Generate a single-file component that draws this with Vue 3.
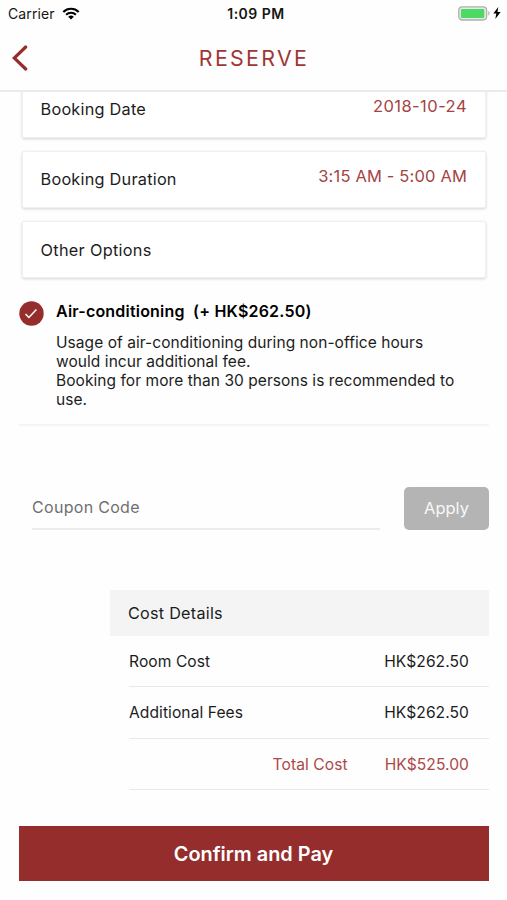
<script setup>
const bookingRows = [
  { id: 'date', label: 'Booking Date', value: '2018-10-24' },
  { id: 'duration', label: 'Booking Duration', value: '3:15 AM - 5:00 AM' },
  { id: 'options', label: 'Other Options', value: '' },
]

const costRows = [
  { id: 'room', label: 'Room Cost', amount: 'HK$262.50' },
  { id: 'fees', label: 'Additional Fees', amount: 'HK$262.50' },
]
</script>

<template>
  <div class="screen">
    <div class="status-bar">
      <div class="carrier">
        <span class="carrier-name">Carrier</span>
        <svg class="wifi" width="18" height="13" viewBox="0 0 18 13" fill="none" stroke="#000" stroke-width="2.1">
          <path d="M1.3 4.9a11 11 0 0 1 15.4 0" />
          <path d="M4.1 7.8a7 7 0 0 1 9.8 0" />
          <path d="M9 12.5 6.2 9.8a4 4 0 0 1 5.6 0Z" fill="#000" stroke="none" />
        </svg>
      </div>
      <span class="clock">1:09 PM</span>
      <div class="power">
        <svg width="34" height="15" viewBox="0 0 34 15">
          <rect x="0.8" y="0.8" width="27.8" height="13.2" rx="3.4" fill="#e4ece4" stroke="#adb0ad" stroke-width="1.3" />
          <rect x="2.9" y="2.9" width="23.4" height="9" rx="1.2" fill="#4cd964" />
          <path d="M30.3 5.1c1.7.5 1.7 4.1 0 4.6Z" fill="#adb0ad" />
        </svg>
        <svg class="bolt" width="8" height="12" viewBox="0 0 8 12">
          <path d="M5.3 0 .3 6.6h3L2.3 12l5.4-7H4.5Z" fill="#000" />
        </svg>
      </div>
    </div>

    <header class="nav-bar">
      <svg class="back" width="16" height="26" viewBox="0 0 16 26" fill="none" stroke="#962d2d" stroke-width="3.2" stroke-linecap="round">
        <path d="M13.7 2 2.2 13l11.5 11" stroke-linejoin="miter" />
      </svg>
      <h1 class="title">RESERVE</h1>
    </header>

    <main class="content">
      <section class="cards">
        <div v-for="row in bookingRows" :key="row.id" class="card">
          <span class="card-label" :class="'label-' + row.id">{{ row.label }}</span>
          <span class="card-value" :class="'value-' + row.id">{{ row.value }}</span>
        </div>
      </section>

      <section class="option">
        <svg class="check" width="25" height="25" viewBox="0 0 25 25" fill="none">
          <circle cx="12.5" cy="12.5" r="12.2" fill="#962d2d" />
          <path d="m6.5 13 3.4 3.5 7.5-8" stroke="#fff" stroke-width="1.5" />
        </svg>
        <div class="option-text">
          <h2 class="option-title">Air-conditioning&nbsp; (+ HK$262.50)</h2>
          <p class="option-note">
            Usage of air-conditioning during non-office hours<br />
            would incur additional fee.<br />
            Booking for more than 30 persons is recommended to<br />
            use.
          </p>
        </div>
      </section>

      <section class="coupon">
        <div class="coupon-field">Coupon Code</div>
        <button class="apply" type="button">Apply</button>
      </section>

      <section class="costs">
        <h2 class="costs-title">Cost Details</h2>
        <div class="cost-rows">
          <div v-for="row in costRows" :key="row.id" class="cost-row">
            <span class="cost-label">{{ row.label }}</span>
            <span>{{ row.amount }}</span>
          </div>
          <div class="cost-row total">
            <span class="total-label">Total Cost</span>
            <span>HK$525.00</span>
          </div>
        </div>
      </section>

      <button class="confirm" type="button">Confirm and Pay</button>
    </main>
  </div>
</template>

<style>
body {
  background: #fefefe;
}
</style>

<style scoped>
.screen {
  display: flex;
  flex-direction: column;
  width: 507px;
  height: 900px;
  overflow: hidden;
  background: #fefefe;
  color: #1c1c1c;
  font-family: Inter, "Liberation Sans", sans-serif;
  font-size: 16px;
}

h1,
h2,
p {
  margin: 0;
  font-weight: 400;
}

button {
  border: 0;
  padding: 0;
  font-family: inherit;
}

.status-bar {
  display: grid;
  grid-template-columns: 1fr auto 1fr;
  align-items: center;
  height: 28px;
  padding: 0 6px 0 8px;
  color: #151515;
}

.carrier {
  display: flex;
  align-items: center;
  gap: 7px;
}

.carrier-name {
  margin-top: -2px;
  font-size: 14px;
  letter-spacing: 0.1px;
}

.wifi {
  margin-top: -2px;
}

.clock {
  padding-left: 3px;
  margin-top: -1px;
  font-size: 14px;
  font-weight: 600;
  letter-spacing: 0.5px;
}

.power {
  display: flex;
  justify-content: flex-end;
  align-items: center;
  gap: 1px;
  margin-top: -2px;
}

.nav-bar {
  display: flex;
  align-items: center;
  flex: none;
  height: 64px;
  box-sizing: border-box;
  padding: 0 12px 2px;
  border-bottom: 2px solid #ebebeb;
}

.title {
  flex: 1;
  padding-right: 15px;
  color: #a13636;
  font-size: 21.4px;
  letter-spacing: 2.3px;
  line-height: 28px;
  text-align: center;
}

.content {
  display: flex;
  flex-direction: column;
  flex: 1;
  min-height: 0;
  overflow: hidden;
}

.cards {
  display: flex;
  flex-direction: column;
  gap: 13px;
  margin-top: -11px;
  padding: 0 21px 0 22px;
}

.card {
  display: flex;
  justify-content: space-between;
  height: 57px;
  box-sizing: border-box;
  padding: 0 18px 0 17.5px;
  border: 1px solid #f0f0f0;
  border-radius: 2px;
  box-shadow: 0 1px 3px rgba(0, 0, 0, 0.17);
  background: #fff;
}

.card-label {
  font-size: 16.3px;
  line-height: 55px;
  letter-spacing: 0.23px;
}

.label-options {
  letter-spacing: 0.3px;
  line-height: 57px;
}

.card-value {
  color: #a54343;
  font-size: 16.5px;
  line-height: 49px;
  letter-spacing: 0.16px;
}

.value-date {
  letter-spacing: 0.45px;
}

.option {
  display: flex;
  gap: 12px;
  height: 124px;
  margin: 22px 18px 0 19px;
  border-bottom: 2px solid #f5f5f5;
}

.check {
  flex: none;
  margin-top: 1px;
}

.option-title {
  padding-top: 1px;
  color: #000;
  font-size: 16px;
  font-weight: 600;
  letter-spacing: 0.2px;
  line-height: 20px;
}

.option-note {
  margin-top: 12px;
  font-size: 15.5px;
  letter-spacing: 0.06px;
  line-height: 19px;
  white-space: nowrap;
}

.coupon {
  display: flex;
  justify-content: space-between;
  height: 43px;
  margin: 61px 18px 0 32px;
}

.coupon-field {
  width: 348px;
  box-sizing: border-box;
  border-bottom: 2px solid #ececec;
  color: #707070;
  letter-spacing: 0.3px;
  line-height: 41px;
}

.apply {
  width: 85px;
  padding-bottom: 2px;
  border-radius: 5px;
  background: #b4b4b4;
  color: #f8f8f8;
  font-size: 16.5px;
}

.costs {
  margin: 60px 18px 0 110px;
}

.costs-title {
  height: 46px;
  padding-left: 18px;
  background: #f4f4f4;
  font-size: 16.2px;
  letter-spacing: 0.25px;
  line-height: 47px;
}

.cost-rows {
  padding-left: 19px;
}

.cost-row {
  display: flex;
  justify-content: space-between;
  height: 51.3px;
  box-sizing: border-box;
  padding-right: 20px;
  border-bottom: 1px solid #e8e8e8;
  font-size: 15.6px;
  letter-spacing: 0.07px;
  line-height: 52px;
}

.total {
  justify-content: flex-end;
  gap: 37px;
  color: #ab4848;
}

.confirm {
  height: 55px;
  flex: none;
  margin: 36px 18px 0 19px;
  padding: 1px 1px 0 0;
  background: #962d2d;
  color: #fff;
  font-size: 19.9px;
  font-weight: 600;
}
</style>
